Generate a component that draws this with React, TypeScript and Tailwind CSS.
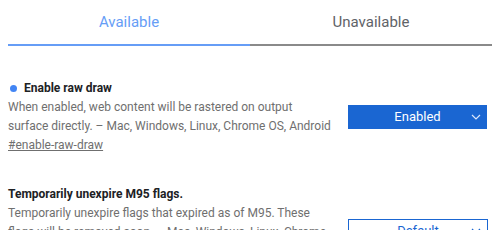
import React from "react";

function Chevron({ className }: { className?: string }) {
  return (
    <svg className={className} width="10" height="6" viewBox="0 0 10 6" fill="none">
      <path d="M1 1l4 4 4-4" stroke="currentColor" strokeWidth="1.2" />
    </svg>
  );
}

export default function App() {
  return (
    <div className="w-[500px] h-[230px] overflow-hidden bg-white px-2" style={{ fontFamily: "Roboto, 'Liberation Sans', sans-serif" }}>
      <div className="flex">
        <div className="flex-1 h-[46px] flex items-center justify-center border-b-2 border-[#669df6] text-[15px] text-[#669df6] pt-[1px]">
          Available
        </div>
        <div className="flex-1 h-[46px] flex items-center justify-center border-b-2 border-[#8a8a8a] text-[15px] text-[#5f6368] pt-[1px]">
          Unavailable
        </div>
      </div>

      <div className="flex items-center mt-[33px]">
        <div className="w-[330px]">
          <div className="flex items-center h-[18px] text-[12px] font-bold text-[#202124]">
            <span className="ml-[2px] mr-[7px] w-[7px] h-[7px] rounded-full bg-[#4285f4]" />
            Enable raw draw
          </div>
          <div className="text-[12px] text-[#6f6f6f] leading-[19px] mt-[1px]">
            When enabled, web content will be rastered on output
            <br />
            surface directly. – Mac, Windows, Linux, Chrome OS, Android
          </div>
          <div className="text-[12px] text-[#6f6f6f] leading-[19px] underline">#enable-raw-draw</div>
        </div>
        <div className="ml-auto mr-[5px] w-[139px] h-[24px] bg-[#1a66d2] text-white text-[13px] flex items-center relative">
          <span className="flex-1 text-center">Enabled</span>
          <Chevron className="absolute right-[6px] text-[#dbe6fb]" />
        </div>
      </div>

      <div className="flex items-start mt-[30px]">
        <div className="w-[330px]">
          <div className="flex items-center h-[18px] text-[12px] font-bold text-[#202124]">Temporarily unexpire M95 flags.</div>
          <div className="text-[12px] text-[#6f6f6f] leading-[19px] mt-[1px]">
            Temporarily unexpire flags that expired as of M95. These
            <br />
            flags will be removed soon. – Mac, Windows, Linux, Chrome OS, Android
          </div>
        </div>
        <div className="ml-auto mr-[4px] mt-[34px] w-[140px] h-[24px] border border-[#1a66d2] text-[#1a66d2] text-[13px] flex items-center relative">
          <span className="flex-1 text-center">Default</span>
          <Chevron className="absolute right-[6px]" />
        </div>
      </div>
    </div>
  );
}
